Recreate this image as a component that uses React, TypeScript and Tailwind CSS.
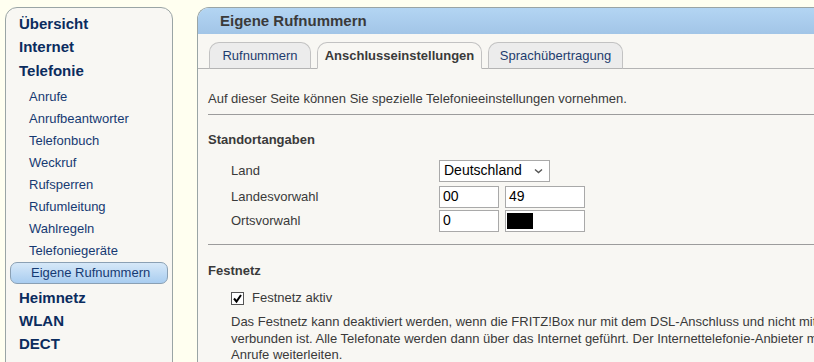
import React from 'react';

const mainNav = ['Übersicht', 'Internet', 'Telefonie'];
const subNav = [
  'Anrufe',
  'Anrufbeantworter',
  'Telefonbuch',
  'Weckruf',
  'Rufsperren',
  'Rufumleitung',
  'Wahlregeln',
  'Telefoniegeräte',
];
const bottomNav = ['Heimnetz', 'WLAN', 'DECT'];

const tabs = [
  { label: 'Rufnummern', active: false, width: 'w-[102px]' },
  { label: 'Anschlusseinstellungen', active: true, width: 'w-[165px]' },
  { label: 'Sprachübertragung', active: false, width: 'w-[135px]' },
];

const App = () => {
  return (
    <div
      className="w-[814px] h-[362px] overflow-hidden bg-[#fffff0] flex gap-[24px] pl-[5px] pt-[7px] text-[13px] text-[#3a3a3a]"
      style={{ fontFamily: '"Liberation Sans", Arial, sans-serif' }}
    >
      {/* Sidebar */}
      <div className="w-[168px] shrink-0 h-[400px] bg-[#f8f7f3] border border-[#9aa5a5] rounded-tl-[12px] rounded-tr-[12px] pt-[4px]">
        {mainNav.map((item) => (
          <div key={item} className="h-[23.5px] pl-[13px] flex items-center text-[15px] font-bold text-[#0b2c5e]">
            {item}
          </div>
        ))}
        <div className="pt-[3px]">
          {subNav.map((item) => (
            <div key={item} className="h-[22px] pl-[23px] flex items-center text-[13px] text-[#163a72]">
              {item}
            </div>
          ))}
          <div className="mx-[4px] h-[22px] pl-[20px] flex items-center text-[13px] text-[#163a72] rounded-[7px] border border-[#8aa0b4] bg-gradient-to-b from-[#d6e8f8] to-[#a9cdf0]">
            Eigene Rufnummern
          </div>
        </div>
        <div className="pt-[3px]">
          {bottomNav.map((item) => (
            <div key={item} className="h-[23px] pl-[13px] flex items-center text-[15px] font-bold text-[#0b2c5e]">
              {item}
            </div>
          ))}
        </div>
      </div>

      {/* Main panel */}
      <div className="flex-1 min-w-0 h-[400px] bg-[#f8f7f3] border border-[#9aa5a5] border-r-0 rounded-tl-[12px] overflow-hidden">
        <div className="h-[26px] bg-gradient-to-b from-[#b3d5f3] to-[#a2c5e7] pl-[22px] flex items-center text-[15px] font-bold text-[#3a3a3a]">
          Eigene Rufnummern
        </div>

        {/* Tabs */}
        <div className="flex items-end gap-[6px] pl-[11px] pt-[8px] border-b border-[#b4b4b4]">
          {tabs.map((tab) => (
            <div
              key={tab.label}
              className={`${tab.width} h-[27px] -mb-px flex items-center justify-center rounded-t-[10px] border border-[#c2c2c2] ${
                tab.active
                  ? 'bg-[#f8f7f3] border-b-[#f8f7f3] font-bold text-[#3a3a3a]'
                  : 'bg-[#ececec] border-b-[#b4b4b4] text-[#1e3c6e]'
              }`}
            >
              {tab.label}
            </div>
          ))}
        </div>

        <div className="pl-[10px]">
          <p className="pt-[20px] h-[45px]">Auf dieser Seite können Sie spezielle Telefonieeinstellungen vornehmen.</p>
          <div className="border-t border-[#9c9c9c]" />

          <div className="pt-[15px] font-bold">Standortangaben</div>

          <div className="pl-[23px] pt-[10px] flex flex-col gap-[2px]">
            <div className="flex items-center h-[22px]">
              <span className="w-[208px]">Land</span>
              <div className="w-[111px] h-[22px] bg-white border border-[#a9a9a9] flex items-center justify-between pl-[4px] pr-[6px] text-[14px] text-black">
                <span>Deutschland</span>
                <svg width="9" height="6" viewBox="0 0 9 6">
                  <path d="M1 1.5 L4.5 4.5 L8 1.5" fill="none" stroke="#555" strokeWidth="1.4" />
                </svg>
              </div>
            </div>
            <div className="flex items-center h-[22px] mt-[2px]">
              <span className="w-[208px]">Landesvorwahl</span>
              <div className="w-[60px] h-[22px] bg-white border border-[#a9a9a9] pl-[3px] flex items-center text-[14px] text-black">00</div>
              <div className="ml-[6px] w-[80px] h-[22px] bg-white border border-[#a9a9a9] pl-[3px] flex items-center text-[14px] text-black">49</div>
            </div>
            <div className="flex items-center h-[22px]">
              <span className="w-[208px]">Ortsvorwahl</span>
              <div className="w-[60px] h-[22px] bg-white border border-[#a9a9a9] pl-[3px] flex items-center text-[14px] text-black">0</div>
              <div className="ml-[6px] w-[80px] h-[22px] bg-white border border-[#a9a9a9] pl-[1px] flex items-center">
                <div className="w-[26px] h-[16px] bg-black" />
              </div>
            </div>
          </div>

          <div className="mt-[12px] border-t border-[#9c9c9c]" />

          <div className="pt-[16px] font-bold">Festnetz</div>

          <div className="pl-[23px] pt-[7px]">
            <label className="flex items-center gap-[8px] h-[22px]">
              <span className="w-[13px] h-[13px] border border-[#555] bg-white flex items-center justify-center">
                <svg width="11" height="11" viewBox="0 0 11 11">
                  <path d="M2 5.5 L4.5 8.5 L9 2" fill="none" stroke="#000" strokeWidth="2" />
                </svg>
              </span>
              <span>Festnetz aktiv</span>
            </label>
            <p className="pt-[5px] leading-[16.5px] whitespace-nowrap">
              Das Festnetz kann deaktiviert werden, wenn die FRITZ!Box nur mit dem DSL-Anschluss und nicht mit dem Festnetz
              <br />
              verbunden ist. Alle Telefonate werden dann über das Internet geführt. Der Internettelefonie-Anbieter muss eingehende
              <br />
              Anrufe weiterleiten.
            </p>
          </div>
        </div>
      </div>
    </div>
  );
};

export default App;
